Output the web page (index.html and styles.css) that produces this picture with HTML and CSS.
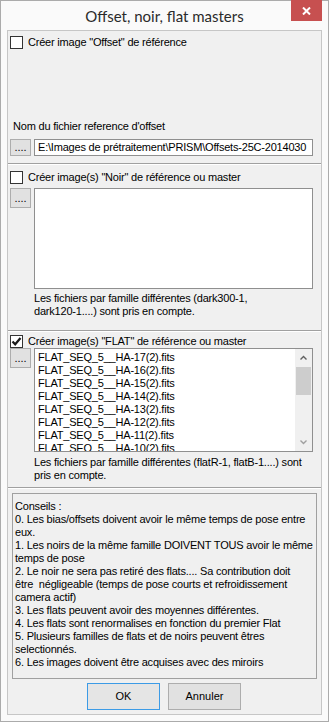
FILE: index.html
```html
<!DOCTYPE html>
<html lang="fr">
<head>
<meta charset="utf-8">
<title>Offset, noir, flat masters</title>
<link rel="stylesheet" href="styles.css">
</head>
<body>
<div class="win">
  <div class="titlebar">
    <span class="title">Offset, noir, flat masters</span>
    <div class="close"><svg width="9" height="8" viewBox="0 0 9 8"><path d="M1 0.5 L8 7.5 M8 0.5 L1 7.5" stroke="#fff" stroke-width="2" fill="none"/></svg></div>
  </div>
  <div class="client">
    <section class="panel p1">
      <div class="chk"><span class="box"></span><span>Créer image "Offset" de référence</span></div>
      <div class="fname">Nom du fichier reference d'offset</div>
      <div class="row">
        <div class="dots short">....</div>
        <div class="edit">E:\Images de prétraitement\PRISM\Offsets-25C-2014030</div>
      </div>
    </section>
    <section class="panel p2">
      <div class="chk"><span class="box"></span><span>Créer image(s) "Noir" de référence ou master</span></div>
      <div class="row">
        <div class="dots">....</div>
        <div class="memo"></div>
      </div>
      <div class="note">Les fichiers par famille différentes (dark300-1,<br>dark120-1....) sont pris en compte.</div>
    </section>
    <section class="panel p3">
      <div class="chk"><span class="box checked"><svg width="11" height="11" viewBox="0 0 11 11"><path d="M1.5 5.5 L4.2 8.3 L9.5 2" stroke="#1a1a1a" stroke-width="2.2" fill="none"/></svg></span><span>Créer image(s) "FLAT" de référence ou master</span></div>
      <div class="row">
        <div class="dots">....</div>
        <div class="list">
          <div class="items">
            <div>FLAT_SEQ_5__HA-17(2).fits</div>
            <div>FLAT_SEQ_5__HA-16(2).fits</div>
            <div>FLAT_SEQ_5__HA-15(2).fits</div>
            <div>FLAT_SEQ_5__HA-14(2).fits</div>
            <div>FLAT_SEQ_5__HA-13(2).fits</div>
            <div>FLAT_SEQ_5__HA-12(2).fits</div>
            <div>FLAT_SEQ_5__HA-11(2).fits</div>
            <div>FLAT_SEQ_5__HA-10(2).fits</div>
          </div>
          <div class="sbar">
            <div class="arrow"><svg width="7" height="5" viewBox="0 0 7 5"><path d="M0.5 4.5 L3.5 1.5 L6.5 4.5" stroke="#606060" stroke-width="1.4" fill="none"/></svg></div>
            <div class="thumb"></div>
            <div class="track"></div>
            <div class="arrow"><svg width="7" height="5" viewBox="0 0 7 5"><path d="M0.5 0.5 L3.5 3.5 L6.5 0.5" stroke="#a0a0a0" stroke-width="1.4" fill="none"/></svg></div>
          </div>
        </div>
      </div>
      <div class="note">Les fichiers par famille différentes (flatR-1, flatB-1....) sont<br>pris en compte.</div>
    </section>
    <section class="panel p4">
      <div class="advice">Conseils :<br>0. Les bias/offsets doivent avoir le même temps de pose entre<br>eux.<br>1. Les noirs de la même famille DOIVENT TOUS avoir le même<br>temps de pose<br>2. Le noir ne sera pas retiré des flats.... Sa contribution doit<br>être&nbsp; négligeable (temps de pose courts et refroidissement<br>camera actif)<br>3. Les flats peuvent avoir des moyennes différentes.<br>4. Les flats sont renormalises en fonction du premier Flat<br>5. Plusieurs familles de flats et de noirs peuvent êtres<br>selectionnés.<br>6. Les images doivent être acquises avec des miroirs</div>
      <div class="buttons">
        <div class="btn default">OK</div>
        <div class="btn">Annuler</div>
      </div>
    </section>
  </div>
</div>
</body>
</html>
```

FILE: styles.css
```css
html, body {
  margin: 0;
  padding: 0;
  background: #ffffff;
}
body {
  font-family: "Liberation Sans", Arial, sans-serif;
  font-size: 11px;
  letter-spacing: -0.2px;
  line-height: 13px;
  color: #000;
}
.win {
  width: 329px;
  height: 722px;
  box-sizing: border-box;
  border: 1px solid #ababab;
  background: #fafafa;
  display: flex;
  flex-direction: column;
}
.titlebar {
  height: 29px;
  flex: none;
  position: relative;
  display: flex;
  align-items: center;
  justify-content: center;
}
.title {
  font-family: Lato, "Noto Sans", sans-serif;
  font-size: 15px;
  letter-spacing: 0;
  color: #2b2b2b;
  line-height: 20px;
  margin-top: 1px;
}
.close {
  position: absolute;
  right: 6px;
  top: -1px;
  width: 31px;
  height: 21px;
  background: #c75050;
  display: flex;
  align-items: center;
  justify-content: center;
}
.client {
  flex: none;
  margin: 0 6px;
  height: 685px;
  box-sizing: border-box;
  border: 1px solid #c6c6c6;
  background: #f0f0f0;
  display: flex;
  flex-direction: column;
}
.panel {
  flex: none;
  box-sizing: border-box;
  border-top: 1px solid #ffffff;
  border-bottom: 1px solid #a0a0a0;
  padding-left: 2px;
  display: flex;
  flex-direction: column;
  align-items: flex-start;
}
.p1 { height: 133px; border-top: none; padding-top: 5px; }
.p2 { height: 167px; padding-top: 6px; }
.p3 { height: 157px; padding-top: 3px; }
.p4 { height: 226px; border-bottom: none; padding: 4px 0 0 0; align-items: stretch; }

.chk {
  display: flex;
  align-items: center;
  gap: 5px;
  height: 13px;
  white-space: nowrap;
}
.box {
  width: 13px;
  height: 13px;
  box-sizing: border-box;
  border: 1px solid #333333;
  background: #ffffff;
  display: flex;
  align-items: center;
  justify-content: center;
}
.fname {
  margin: 71px 0 0 3px;
  white-space: nowrap;
}
.row {
  display: flex;
  gap: 3px;
  align-items: flex-start;
}
.p1 .row { margin-top: 6px; }
.p2 .row { margin-top: 4px; }
.p3 .row { margin-top: 0; }

.dots {
  width: 21px;
  height: 20px;
  box-sizing: border-box;
  border: 1px solid #adadad;
  background: #e1e1e1;
  display: flex;
  align-items: center;
  justify-content: center;
  font-size: 11px;
  letter-spacing: 0;
  padding-bottom: 0;
}
.dots.short { height: 17px; }
.edit {
  width: 279px;
  height: 17px;
  box-sizing: border-box;
  border: 1px solid #8f8f8f;
  background: #ffffff;
  padding: 1px 0 0 3px;
  white-space: nowrap;
  overflow: hidden;
}
.memo {
  width: 279px;
  height: 101px;
  box-sizing: border-box;
  border: 1px solid #8f8f8f;
  background: #ffffff;
}
.note {
  margin: 3px 0 0 24px;
  white-space: nowrap;
}
.p3 .note { margin-top: 4px; }

.list {
  width: 279px;
  height: 104px;
  box-sizing: border-box;
  border: 1px solid #8f8f8f;
  background: #ffffff;
  display: flex;
  overflow: hidden;
}
.items {
  flex: 1;
  padding: 2px 0 0 3px;
  white-space: nowrap;
  overflow: hidden;
}
.sbar {
  width: 17px;
  flex: none;
  background: #f0f0f0;
  display: flex;
  flex-direction: column;
}
.arrow {
  height: 17px;
  flex: none;
  display: flex;
  align-items: center;
  justify-content: center;
}
.thumb {
  height: 28px;
  flex: none;
  margin: 1px 1px 0 1px;
  background: #cdcdcd;
}
.track { flex: 1; }

.advice {
  margin: 0 4px 0 4px;
  height: 186px;
  box-sizing: border-box;
  border: 1px solid #a0a0a0;
  padding: 6px 0 0 2px;
  white-space: nowrap;
}
.buttons {
  margin-top: 4px;
  display: flex;
  justify-content: center;
  gap: 8px;
  padding-right: 1px;
}
.btn {
  width: 73px;
  height: 27px;
  box-sizing: border-box;
  border: 1px solid #adadad;
  background: #e1e1e1;
  display: flex;
  align-items: center;
  justify-content: center;
  letter-spacing: 0;
}
.btn.default {
  border-color: #3c9be6;
  background: #e5e5e5;
}
```
